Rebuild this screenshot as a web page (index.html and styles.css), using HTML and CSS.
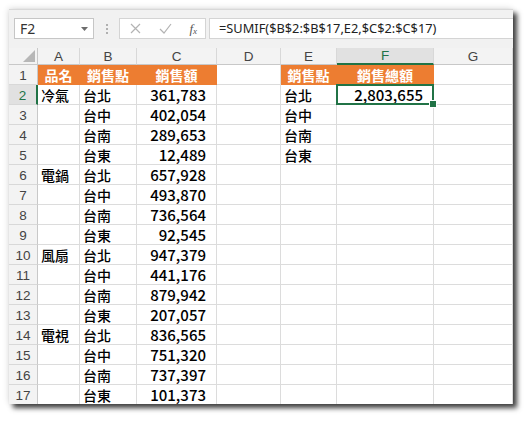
FILE: index.html
```html
<!DOCTYPE html>
<html>
<head>
<meta charset="utf-8">
<link rel="stylesheet" href="styles.css">
</head>
<body>
<div class="window">
  <div class="fbar">
    <div class="namebox"><span>F2</span>
      <svg class="dd" width="7" height="4" viewBox="0 0 7 4"><path d="M0 0h7L3.5 4z" fill="#6d6d6d"/></svg>
    </div>
    <div class="dots"><i></i><i></i><i></i></div>
    <div class="btns">
      <svg width="11" height="11" viewBox="0 0 11 11"><path d="M1 1l9 9M10 1l-9 9" stroke="#b3b3b3" stroke-width="1.2" fill="none"/></svg>
      <svg width="13" height="11" viewBox="0 0 13 11"><path d="M1 6l4 4l7-9" stroke="#b3b3b3" stroke-width="1.2" fill="none"/></svg>
      <span class="fx">f<sub>x</sub></span>
    </div>
    <div class="finput">=SUMIF($B$2:$B$17,E2,$C$2:$C$17)</div>
  </div>
  <div class="grid">
    <div class="corner"><svg width="12" height="12" viewBox="0 0 12 12"><path d="M12 0v12H0z" fill="#b7b7b7"/></svg></div>
    <div class="ch">A</div><div class="ch">B</div><div class="ch">C</div><div class="ch">D</div><div class="ch">E</div><div class="ch sel">F</div><div class="ch">G</div>

    <div class="rh">1</div><div class="c hd">品名</div><div class="c hd">銷售點</div><div class="c hd">銷售額</div><div class="c"></div><div class="c hd">銷售點</div><div class="c hd">銷售總額</div><div class="c"></div>
    <div class="rh sel">2</div><div class="c">冷氣</div><div class="c">台北</div><div class="c num">361,783</div><div class="c"></div><div class="c">台北</div><div class="c num active">2,803,655</div><div class="c"></div>
    <div class="rh">3</div><div class="c"></div><div class="c">台中</div><div class="c num">402,054</div><div class="c"></div><div class="c">台中</div><div class="c"></div><div class="c"></div>
    <div class="rh">4</div><div class="c"></div><div class="c">台南</div><div class="c num">289,653</div><div class="c"></div><div class="c">台南</div><div class="c"></div><div class="c"></div>
    <div class="rh">5</div><div class="c"></div><div class="c">台東</div><div class="c num">12,489</div><div class="c"></div><div class="c">台東</div><div class="c"></div><div class="c"></div>
    <div class="rh">6</div><div class="c">電鍋</div><div class="c">台北</div><div class="c num">657,928</div><div class="c"></div><div class="c"></div><div class="c"></div><div class="c"></div>
    <div class="rh">7</div><div class="c"></div><div class="c">台中</div><div class="c num">493,870</div><div class="c"></div><div class="c"></div><div class="c"></div><div class="c"></div>
    <div class="rh">8</div><div class="c"></div><div class="c">台南</div><div class="c num">736,564</div><div class="c"></div><div class="c"></div><div class="c"></div><div class="c"></div>
    <div class="rh">9</div><div class="c"></div><div class="c">台東</div><div class="c num">92,545</div><div class="c"></div><div class="c"></div><div class="c"></div><div class="c"></div>
    <div class="rh">10</div><div class="c">風扇</div><div class="c">台北</div><div class="c num">947,379</div><div class="c"></div><div class="c"></div><div class="c"></div><div class="c"></div>
    <div class="rh">11</div><div class="c"></div><div class="c">台中</div><div class="c num">441,176</div><div class="c"></div><div class="c"></div><div class="c"></div><div class="c"></div>
    <div class="rh">12</div><div class="c"></div><div class="c">台南</div><div class="c num">879,942</div><div class="c"></div><div class="c"></div><div class="c"></div><div class="c"></div>
    <div class="rh">13</div><div class="c"></div><div class="c">台東</div><div class="c num">207,057</div><div class="c"></div><div class="c"></div><div class="c"></div><div class="c"></div>
    <div class="rh">14</div><div class="c">電視</div><div class="c">台北</div><div class="c num">836,565</div><div class="c"></div><div class="c"></div><div class="c"></div><div class="c"></div>
    <div class="rh">15</div><div class="c"></div><div class="c">台中</div><div class="c num">751,320</div><div class="c"></div><div class="c"></div><div class="c"></div><div class="c"></div>
    <div class="rh">16</div><div class="c"></div><div class="c">台南</div><div class="c num">737,397</div><div class="c"></div><div class="c"></div><div class="c"></div><div class="c"></div>
    <div class="rh">17</div><div class="c"></div><div class="c">台東</div><div class="c num">101,373</div><div class="c"></div><div class="c"></div><div class="c"></div><div class="c"></div>
  </div>
</div>
</body>
</html>
```
FILE: styles.css
```css
* { box-sizing: border-box; }
html, body { margin: 0; padding: 0; background: #fff; }
body { width: 529px; height: 421px; overflow: hidden; }

.window {
  margin: 9px 0 0 9px;
  width: 504px;
  height: 395px;
  overflow: hidden;
  background: #f1f1f1;
  border-top: 1px solid #d8d8d8;
  box-shadow: 4px 4px 5px rgba(0,0,0,0.75), -1px -1px 6px rgba(0,0,0,0.12);
}

.fbar {
  display: flex;
  align-items: center;
  height: 38px;
  padding: 8px 0 9px 5px;
  font-family: "Noto Sans", "Liberation Sans", sans-serif;
}
.namebox {
  width: 80px;
  height: 21px;
  background: #fff;
  border: 1px solid #c6c6c6;
  display: flex;
  align-items: center;
  justify-content: space-between;
  padding: 0 5px 0 5px;
  font-size: 14px;
  color: #333;
}
.dd { margin-top: 1px; }
.dots {
  width: 25px;
  display: flex;
  flex-direction: column;
  align-items: center;
  gap: 2px;
}
.dots i { display: block; width: 2px; height: 2px; background: #b0b0b0; }
.btns {
  width: 87px;
  height: 21px;
  background: #fff;
  border: 1px solid #d4d4d4;
  display: flex;
  align-items: center;
  justify-content: space-between;
  padding: 0 8px 0 10px;
}
.fx {
  font-family: "Liberation Serif", serif;
  font-style: italic;
  font-size: 13px;
  color: #555;
}
.fx sub { font-size: 9px; vertical-align: -1px; }
.finput {
  flex: 1;
  height: 21px;
  margin-left: 3px;
  background: #fff;
  border: 1px solid #d4d4d4;
  border-right: none;
  padding-left: 9px;
  font-size: 12.8px;
  line-height: 19px;
  color: #222;
  white-space: nowrap;
  overflow: hidden;
}

.grid {
  display: grid;
  grid-template-columns: 29px 42px 57px 80px 64px 56px 97px 79px;
  grid-template-rows: 17px repeat(17, 20px);
  background: #fff;
}
.corner, .ch, .rh {
  background: #f3f3f3;
  color: #444;
  font-family: "Liberation Sans", Arial, sans-serif;
  font-size: 13.5px;
  display: flex;
  align-items: center;
  justify-content: center;
}
.corner {
  border-right: 1px solid #c8c8c8;
  border-bottom: 1px solid #c8c8c8;
  align-items: flex-end;
  justify-content: flex-end;
  padding: 0 2px 2px 0;
}
.ch {
  border-right: 1px solid #d8d8d8;
  border-bottom: 1px solid #c8c8c8;
}
.ch.sel {
  background: #e1e1e1;
  color: #217346;
  border-bottom: 2px solid #217346;
}
.rh {
  border-right: 1px solid #c8c8c8;
  border-bottom: 1px solid #d8d8d8;
  padding-top: 2px;
}
.rh.sel {
  background: #e1e1e1;
  color: #217346;
  border-right: 2px solid #217346;
}
.c {
  border-right: 1px solid #dcdcdc;
  border-bottom: 1px solid #dcdcdc;
  display: flex;
  align-items: center;
  padding-left: 3px;
  font-family: "Noto Sans CJK TC", sans-serif;
  font-size: 14px;
  font-weight: 500;
  color: #000;
  white-space: nowrap;
  position: relative;
}
.c.hd {
  background: #ed7d31;
  color: #fff;
  border-color: #ed7d31;
  justify-content: center;
  padding-left: 0;
  font-weight: bold;
}
.c.num {
  justify-content: flex-end;
  padding-right: 10px;
  font-size: 15px;
}
.c.active::after {
  content: "";
  position: absolute;
  left: -1px; top: -1px; right: -1px; bottom: -1px;
  border: 2px solid #217346;
}
.c.active::before {
  content: "";
  position: absolute;
  right: -4px; bottom: -4px;
  width: 6px; height: 6px;
  background: #217346;
  border: 1px solid #fff;
  z-index: 2;
}
```
